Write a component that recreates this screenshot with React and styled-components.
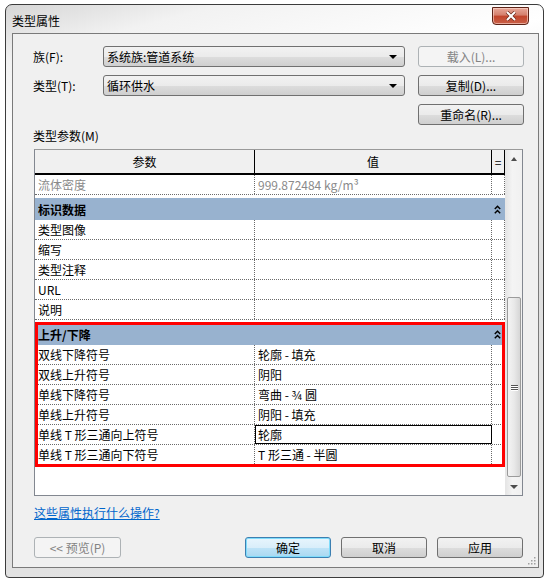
import styled, { createGlobalStyle } from "styled-components";

const GlobalStyle = createGlobalStyle`
  html, body { margin: 0; padding: 0; background: #fff; }
  body {
    font-family: "Noto Sans CJK SC", "Liberation Sans", sans-serif;
    font-size: 12px;
    color: #000;
  }
  * { box-sizing: border-box; }
`;

const Window = styled.div`
  width: 539px;
  height: 574px;
  margin: 4px 0 0 5px;
  border: 1px solid #3c3c3c;
  border-radius: 7px 7px 4px 4px;
  background: linear-gradient(165deg, #d6d6d6 0%, #f2f2f2 8%, #ffffff 22%, #eaeaea 34%, #dedede 60%, #e6e6e6 100%);
  padding: 0 4px 9px 6px;
  display: flex;
  flex-direction: column;
`;

const TitleBar = styled.div`
  height: 28px;
  display: flex;
  align-items: flex-start;
  justify-content: space-between;
`;

const TitleText = styled.span`
  align-self: center;
  padding-top: 2px;
  font-size: 12px;
  color: #000;
`;

const CloseButton = styled.div`
  width: 37px;
  height: 18px;
  margin: 2px 10px 0 0;
  border: 1px solid #5e2418;
  border-radius: 0 0 4px 4px;
  background: linear-gradient(#e8a899 0%, #d47f6c 45%, #c2452c 50%, #c96048 100%);
  box-shadow: inset 0 0 0 1px rgba(255, 220, 210, 0.6);
  display: flex;
  align-items: center;
  justify-content: center;
`;

const Client = styled.div`
  flex: 1;
  border: 1px solid #7a7a7a;
  background: #f0f0f0;
  display: flex;
  flex-direction: column;
  padding: 12px 0 0 20px;
  position: relative;
`;

const FormRows = styled.div`
  display: flex;
  flex-direction: column;
  gap: 8px;
`;

const FormRow = styled.div`
  height: 21px;
  display: flex;
  align-items: center;
`;

const Label = styled.div`
  width: 70px;
  flex: none;
  line-height: 21px;
  font-size: 12px;
`;

const Select = styled.div`
  width: 302px;
  flex: none;
  height: 21px;
  margin-right: 13px;
  border: 1px solid #707070;
  border-radius: 3px;
  background: linear-gradient(#f2f2f2 0%, #ebebeb 50%, #dddddd 51%, #cfcfcf 100%);
  display: flex;
  align-items: center;
  justify-content: space-between;
  padding: 0 7px 0 3px;
`;

const Arrow = styled.span`
  width: 0;
  height: 0;
  border-left: 4px solid transparent;
  border-right: 4px solid transparent;
  border-top: 4px solid ${(p) => p.color || "#000"};
`;

const Button = styled.div`
  flex: none;
  height: 21px;
  width: ${(p) => p.width || "106px"};
  margin-left: ${(p) => p.offset || "0"};
  border: 1px solid ${(p) => (p.disabled ? "#adb2b5" : p.primary ? "#3c7fb1" : "#707070")};
  border-radius: 3px;
  background: ${(p) =>
    p.disabled
      ? "#f4f4f4"
      : p.primary
      ? "linear-gradient(#e7f5fd 0%, #d9eefa 50%, #bee3f7 51%, #a9d8f1 100%)"
      : "linear-gradient(#f2f2f2 0%, #ebebeb 50%, #dddddd 51%, #cfcfcf 100%)"};
  box-shadow: ${(p) => (p.primary ? "inset 0 0 0 1px #7fdcfb" : "none")};
  color: ${(p) => (p.disabled ? "#838383" : "#000")};
  display: flex;
  align-items: center;
  justify-content: center;
  font-size: 12px;
`;

const SectionLabel = styled.div`
  margin-top: 3px;
  height: 16px;
  line-height: 16px;
`;

const Table = styled.div`
  margin: 5px 0 0 1px;
  width: 489px;
  height: 347px;
  border: 1px solid #828790;
  border-top-color: #9a9a9a;
  background: #fff;
  display: flex;
`;

const Grid = styled.div`
  width: 470px;
  display: flex;
  flex-direction: column;
`;

const Header = styled.div`
  height: 25px;
  display: grid;
  grid-template-columns: 220px 237px 13px;
  border-bottom: 2px solid #000;
  background: #f0f0f0;
`;

const HeadCell = styled.div`
  border-right: 1px solid #000;
  display: flex;
  align-items: center;
  justify-content: center;
  font-size: 12px;
`;

const Row = styled.div`
  height: 20px;
  display: grid;
  grid-template-columns: 220px 237px 13px;
  border-bottom: 1px dotted #6a6a6a;
  color: ${(p) => (p.muted ? "#8a8a8a" : "#000")};
`;

const Cell = styled.div`
  border-right: 1px dotted #6a6a6a;
  padding-left: 3px;
  line-height: 19px;
  font-size: 12px;
  white-space: nowrap;
  overflow: hidden;
  ${(p) =>
    p.selected &&
    `
    border: 1px solid #000;
    padding-left: 2px;
    line-height: 17px;
  `}
`;

const Section = styled.div`
  height: 22px;
  margin-top: ${(p) => p.gap || "3px"};
  background: #98b2cf;
  display: flex;
  align-items: center;
  justify-content: space-between;
  padding: 0 4px 0 3px;
  font-weight: bold;
  font-size: 12px;
`;

const Highlight = styled.div`
  margin-top: 2px;
  padding: 0 0 2px;
  outline: 3px solid #ff0000;
  outline-offset: -3px;
`;

const Scrollbar = styled.div`
  width: 17px;
  border-left: 1px solid #e6e6e6;
  background: linear-gradient(90deg, #e6e6e6, #f4f4f4 40%, #f0f0f0);
  display: flex;
  flex-direction: column;
`;

const ScrollArrow = styled.div`
  height: 17px;
  display: flex;
  align-items: center;
  justify-content: center;
`;

const UpArrow = styled.span`
  width: 0;
  height: 0;
  border-left: 3.5px solid transparent;
  border-right: 3.5px solid transparent;
  border-bottom: 4px solid #4d4d4d;
`;

const Thumb = styled.div`
  margin: 130px 1px 0 1px;
  height: 180px;
  border: 1px solid #9b9b9b;
  border-radius: 2px;
  background: linear-gradient(90deg, #f4f4f4 0%, #e9e9e9 50%, #d6d6d6 100%);
  display: flex;
  align-items: center;
  justify-content: center;
`;

const Grip = styled.div`
  width: 7px;
  display: flex;
  flex-direction: column;
  gap: 1px;
  span {
    height: 1px;
    background: #555;
    box-shadow: 0 1px 0 #fff;
  }
`;

const Spacer = styled.div`
  flex: 1;
`;

const HelpLink = styled.a`
  margin: 10px 0 0 1px;
  line-height: 14px;
  color: #0066cc;
  text-decoration: underline;
  font-size: 12px;
  align-self: flex-start;
`;

const ButtonRow = styled.div`
  margin: 17px 0 0 1px;
  width: 489px;
  display: flex;
  gap: 10px;
`;

const Push = styled.div`
  flex: 1;
`;

const SizeGrip = styled.svg`
  position: absolute;
  right: 2px;
  bottom: 2px;
`;

const Chevrons = () => (
  <svg width="7" height="9" viewBox="0 0 7 9">
    <path d="M0.8 4 L3.5 1.2 L6.2 4 M0.8 8.2 L3.5 5.4 L6.2 8.2" stroke="#000" strokeWidth="1.4" fill="none" />
  </svg>
);

const CloseX = () => (
  <svg width="12" height="10" viewBox="0 0 12 10">
    <path d="M2 1 L10 9 M10 1 L2 9" stroke="#6b2a1c" strokeWidth="3.4" />
    <path d="M2 1 L10 9 M10 1 L2 9" stroke="#fff" strokeWidth="2" />
  </svg>
);

const identity = ["类型图像", "缩写", "类型注释", "URL", "说明"];

const risers = [
  ["双线下降符号", "轮廓 - 填充"],
  ["双线上升符号", "阴阳"],
  ["单线下降符号", "弯曲 - ¾ 圆"],
  ["单线上升符号", "阴阳 - 填充"],
  ["单线 T 形三通向上符号", "轮廓", true],
  ["单线 T 形三通向下符号", "T 形三通 - 半圆"],
];

export default function App() {
  return (
    <>
      <GlobalStyle />
      <Window>
        <TitleBar>
          <TitleText>类型属性</TitleText>
          <CloseButton>
            <CloseX />
          </CloseButton>
        </TitleBar>
        <Client>
          <FormRows>
            <FormRow>
              <Label>族(F):</Label>
              <Select>
                <span>系统族:管道系统</span>
                <Arrow />
              </Select>
              <Button disabled>载入(L)...</Button>
            </FormRow>
            <FormRow>
              <Label>类型(T):</Label>
              <Select>
                <span>循环供水</span>
                <Arrow />
              </Select>
              <Button>复制(D)...</Button>
            </FormRow>
            <FormRow>
              <Button offset="385px">重命名(R)...</Button>
            </FormRow>
          </FormRows>

          <SectionLabel>类型参数(M)</SectionLabel>

          <Table>
            <Grid>
              <Header>
                <HeadCell>参数</HeadCell>
                <HeadCell>值</HeadCell>
                <HeadCell>=</HeadCell>
              </Header>
              <Row muted>
                <Cell>流体密度</Cell>
                <Cell>999.872484 kg/m³</Cell>
                <Cell />
              </Row>
              <Section>
                <span>标识数据</span>
                <Chevrons />
              </Section>
              {identity.map((name) => (
                <Row key={name}>
                  <Cell>{name}</Cell>
                  <Cell />
                  <Cell />
                </Row>
              ))}
              <Highlight>
                <Section gap="1px">
                  <span>上升/下降</span>
                  <Chevrons />
                </Section>
                {risers.map(([name, value, selected]) => (
                  <Row key={name}>
                    <Cell>{name}</Cell>
                    <Cell selected={selected}>{value}</Cell>
                    <Cell />
                  </Row>
                ))}
              </Highlight>
            </Grid>
            <Scrollbar>
              <ScrollArrow>
                <UpArrow />
              </ScrollArrow>
              <Thumb>
                <Grip>
                  <span />
                  <span />
                  <span />
                </Grip>
              </Thumb>
              <Spacer />
              <ScrollArrow>
                <Arrow color="#4d4d4d" />
              </ScrollArrow>
            </Scrollbar>
          </Table>

          <HelpLink href="#">这些属性执行什么操作?</HelpLink>

          <ButtonRow>
            <Button disabled width="87px">&lt;&lt; 预览(P)</Button>
            <Push />
            <Button primary width="86px">确定</Button>
            <Button width="86px">取消</Button>
            <Button width="86px">应用</Button>
          </ButtonRow>

          <SizeGrip width="9" height="9" viewBox="0 0 9 9">
            {[[7, 1], [7, 4], [4, 4], [7, 7], [4, 7], [1, 7]].map(([x, y]) => (
              <rect key={`${x}-${y}`} x={x} y={y} width="1.5" height="1.5" fill="#a0a0a0" />
            ))}
          </SizeGrip>
        </Client>
      </Window>
    </>
  );
}
